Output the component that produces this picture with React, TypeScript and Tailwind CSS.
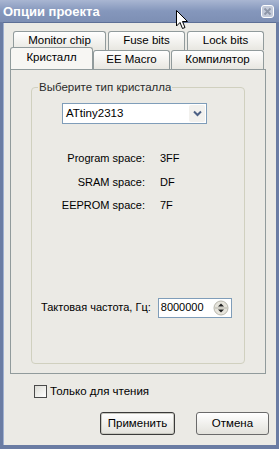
import React from 'react';

const font = "font-['Liberation_Sans',Arial,sans-serif]";

function Tab({ label, w, active = false }: { label: string; w: number; active?: boolean }) {
  return (
    <div
      style={{ width: w }}
      className={
        active
          ? 'relative z-10 -mt-[3px] -mb-px flex h-[22px] items-start justify-center rounded-t-[3px] border border-b-0 border-[#919b9c] bg-[#f7f6f3] pt-[3px] text-[11.5px] text-black'
          : 'flex h-[19px] items-start justify-center rounded-t-[3px] border border-b-0 border-[#919b9c] bg-gradient-to-b from-white to-[#e8e7e1] pt-[2px] text-[11.5px] text-black'
      }
    >
      {label}
    </div>
  );
}

function InfoRow({ label, value }: { label: string; value: string }) {
  return (
    <div className="flex h-[23.5px] items-center">
      <span className="w-[113px] text-right">{label}</span>
      <span className="ml-[15px]">{value}</span>
    </div>
  );
}

export default function App() {
  return (
    <div className={`relative flex h-[449px] w-[279px] flex-col bg-[#6a7ca3] ${font} text-[11px] leading-[13px] text-black`}>
      {/* title bar */}
      <div className="flex h-[22px] items-center justify-between bg-gradient-to-b from-[#a9b6d2] via-[#8597bc] to-[#7d8fb4] pl-[3px] pr-[5px]">
        <span className="text-[13px] font-bold text-white">Опции проекта</span>
        <div className="flex h-[13px] w-[13px] items-center justify-center rounded-[3px] border border-white bg-[#c3cad9]">
          <svg width="9" height="9" viewBox="0 0 9 9">
            <path d="M1.5 1.5 L7.5 7.5 M7.5 1.5 L1.5 7.5" stroke="#8d96a8" strokeWidth="1.8" />
          </svg>
        </div>
      </div>

      {/* window body */}
      <div className="mx-[3px] mb-[4px] flex flex-1 flex-col border-t border-[#5d6f96] bg-[#ebeae5] shadow-[inset_1px_0_0_#9fb0d0]">
        {/* tabs */}
        <div className="mt-[8px] flex gap-[2px] pl-[10px]">
          <Tab label="Monitor chip" w={93} />
          <Tab label="Fuse bits" w={77} />
          <Tab label="Lock bits" w={77} />
        </div>
        <div className="flex pl-[7px]">
          <Tab label="Кристалл" w={83} active />
          <Tab label="EE Macro" w={77} />
          <div className="ml-[1px]">
            <Tab label="Компилятор" w={93} />
          </div>
        </div>

        {/* tab panel */}
        <div className="ml-[7px] flex h-[305px] w-[256px] flex-col border border-[#919b9c] bg-[#ebeae5] px-[20px] pt-[11px]">
          <fieldset className="flex h-[283px] flex-col rounded-[4px] border border-[#d0d0bf] px-0">
            <legend className="ml-[6px] px-px text-[11.5px] leading-[13px] text-[#2a2a2a]">Выберите тип кристалла</legend>
            <div className="mt-[9px] ml-[30px] flex h-[21px] w-[145px] items-center border border-[#7f9db9] bg-white text-[11.5px]">
              <span className="flex-1 pl-[3px]">ATtiny2313</span>
              <div className="mr-px flex h-[17px] w-[16px] items-center justify-center rounded-[2px] bg-[#f2f1ee]">
                <svg width="9" height="7" viewBox="0 0 9 7">
                  <path d="M1 1.5 L4.5 5 L8 1.5" stroke="#4d6185" strokeWidth="2" fill="none" />
                </svg>
              </div>
            </div>

            <div className="mt-[23px] flex flex-col">
              <InfoRow label="Program space:" value="3FF" />
              <InfoRow label="SRAM space:" value="DF" />
              <InfoRow label="EEPROM space:" value="7F" />
            </div>

            <div className="mt-[80px] ml-[9px] flex items-center">
              <span>Тактовая частота, Гц:</span>
              <div className="ml-[7px] flex h-[20px] w-[74px] items-center border border-[#7f9db9] bg-white">
                <span className="flex-1 pl-[2px]">8000000</span>
                <svg width="16" height="16" viewBox="0 0 16 16" className="mr-[2px]">
                  <rect x="1" y="1" width="14" height="14" rx="7" fill="#e6e4dc" stroke="#b9b7ad" />
                  <line x1="2" y1="8" x2="14" y2="8" stroke="#b9b7ad" />
                  <path d="M5 6.5 L8 3.5 L11 6.5 Z" fill="#222" />
                  <path d="M5 9.5 L8 12.5 L11 9.5 Z" fill="#222" />
                </svg>
              </div>
            </div>
          </fieldset>
        </div>

        {/* read only */}
        <div className="mt-[11px] ml-[31px] flex h-[13px] items-center gap-[3px]">
          <div className="h-[13px] w-[13px] border border-[#4a4a4a] bg-gradient-to-br from-[#dcdcd5] to-white" />
          <span className="text-[11.5px]">Только для чтения</span>
        </div>

        {/* buttons */}
        <div className="mt-[14px] flex justify-end gap-[21px] pr-[7px]">
          <button className="flex h-[23px] w-[75px] items-center justify-center rounded-[3px] border border-[#3a3a3a] bg-gradient-to-b from-white to-[#e3e2dc] text-[11.5px] shadow-[inset_0_0_0_1px_#c8c8c0]">
            Применить
          </button>
          <button className="flex h-[23px] w-[73px] items-center justify-center rounded-[3px] border border-[#6a6a6a] bg-gradient-to-b from-white to-[#e3e2dc] text-[11.5px]">
            Отмена
          </button>
        </div>
      </div>

      {/* mouse pointer */}
      <svg className="absolute left-[176px] top-[10px]" width="13" height="21" viewBox="0 0 13 21">
        <path d="M0.5 0.5 L0.5 16 L4 12.5 L6.5 18.5 L9 17.5 L6.5 11.5 L11.5 11.5 Z" fill="white" stroke="black" strokeWidth="1" />
      </svg>
    </div>
  );
}
